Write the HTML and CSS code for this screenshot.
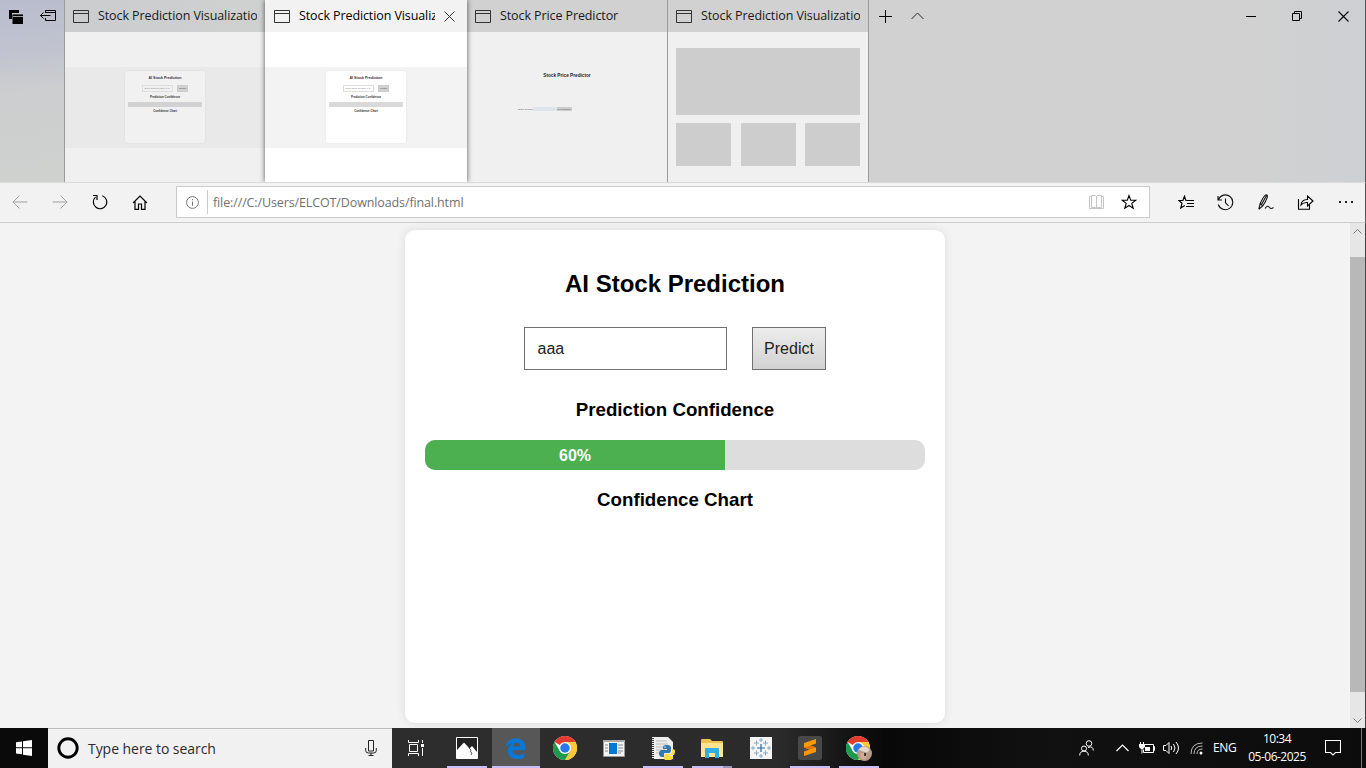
FILE: index.html
```html
<!DOCTYPE html>
<html lang="en">
<head>
<meta charset="utf-8">
<title>Stock Prediction Visualization</title>
<link rel="stylesheet" href="styles.css">
</head>
<body>
<svg class="defs" width="0" height="0">
  <symbol id="win" viewBox="0 0 16 13"><path d="M.5.5h15v12H.5zM.5 3.5h15" fill="none" stroke="currentColor"/></symbol>
  <symbol id="chrome" viewBox="0 0 48 48">
    <circle cx="24" cy="24" r="24" fill="#fff"/>
    <path d="M24 24 3.2 12A24 24 0 0 1 44.8 12H24z" fill="#e33b2e"/>
    <path d="M44.8 12A24 24 0 0 1 24 48l10.4-18A12 12 0 0 0 34.400 18L24 12z" fill="#fcc934"/>
    <path d="M3.200 12A24 24 0 0 0 24 48l10.400-18L24 36 13.600 30z" fill="#1e9a4b"/>
    <circle cx="24" cy="24" r="12" fill="#fff"/><circle cx="24" cy="24" r="9.500" fill="#2878e8"/>
  </symbol>
</svg>
<div class="screen">
  <header class="tabs">
    <div class="tab-tools">
      <svg width="14" height="14" viewBox="0 0 14 14"><path d="M0 0h10v3H3v6H0z"/><path d="M3.500 4H14v10H3.500z"/><path d="M3 4h11M4 6.500h10" stroke="#c5c8d1" stroke-width=".8"/></svg>
      <svg width="16" height="11" viewBox="0 0 16 11"><path d="M5.500 3V.5h10v10h-10V8M5.500 2.500h10M.5 5.500h10M3.500 2.500l-3 3 3 3" fill="none" stroke="#000"/></svg>
    </div>
    <div class="tab faded">
      <div class="tab-head"><svg width="16" height="13"><use href="#win"/></svg><span class="tab-title">Stock Prediction Visualization</span></div>
      <div class="thumb"><div class="mini-page"><div class="mini-card">
        <b class="mini-h">AI Stock Prediction</b>
        <div class="mini-row"><i class="mini-input">Enter Stock Symbol (e.g.,</i><i class="mini-btn">Predict</i></div>
        <b class="mini-s">Prediction Confidence</b><div class="mini-bar"></div><b class="mini-s">Confidence Chart</b>
      </div></div></div>
    </div>
    <div class="tab active">
      <div class="tab-head"><svg width="16" height="13"><use href="#win"/></svg><span class="tab-title">Stock Prediction Visualization</span>
        <svg class="tab-close" width="11" height="11" viewBox="0 0 11 11"><path d="m.5.5 10 10m0-10-10 10" stroke="#333"/></svg></div>
      <div class="thumb"><div class="mini-page"><div class="mini-card">
        <b class="mini-h">AI Stock Prediction</b>
        <div class="mini-row"><i class="mini-input">Enter Stock Symbol (e.g.,</i><i class="mini-btn">Predict</i></div>
        <b class="mini-s">Prediction Confidence</b><div class="mini-bar"></div><b class="mini-s">Confidence Chart</b>
      </div></div></div>
    </div>
    <div class="tab third">
      <div class="tab-head"><svg width="16" height="13"><use href="#win"/></svg><span class="tab-title">Stock Price Predictor</span></div>
      <div class="thumb predictor"><b class="pred-title">Stock Price Predictor</b><div class="pred-form"><span>Stock Symbol:</span><i class="pred-input"></i><i class="pred-btn">Get Prediction</i></div></div>
    </div>
    <div class="tab last">
      <div class="tab-head"><svg width="16" height="13"><use href="#win"/></svg><span class="tab-title">Stock Prediction Visualization</span></div>
      <div class="thumb blocks"><i class="wide"></i><i></i><i></i><i></i></div>
    </div>
    <div class="new-tab">
      <svg width="13" height="13" viewBox="0 0 13 13"><path d="M0 6.500h13M6.500 0v13" stroke="#000"/></svg>
      <svg width="13" height="8" viewBox="0 0 13 8"><path d="m.5 7 6-6 6 6" fill="none" stroke="#222"/></svg>
    </div>
    <div class="window-buttons">
      <svg width="10" height="11" viewBox="0 0 10 11"><path d="M0 5.500h10" stroke="#000"/></svg>
      <svg width="10" height="10" viewBox="0 0 10 10"><path d="M.5 2.500h7v7h-7zM2.500 2.500v-2h7v7h-2" fill="none" stroke="#000"/></svg>
      <svg width="11" height="11" viewBox="0 0 11 11"><path d="m.5.5 10 10m0-10-10 10" stroke="#000" stroke-width="1.100"/></svg>
    </div>
  </header>

  <nav class="toolbar">
    <div class="nav-icons">
      <svg width="16" height="14" viewBox="0 0 16 14"><path d="M15.500 7H1M7.500.5 1 7l6.500 6.500" fill="none" stroke="#a0a0a0"/></svg>
      <svg width="16" height="14" viewBox="0 0 16 14"><path d="M.5 7H15M8.500.5 15 7l-6.500 6.500" fill="none" stroke="#a0a0a0"/></svg>
      <svg width="16" height="16" viewBox="0 0 16 16"><path d="M10.300 1.700A6.700 6.700 0 1 1 3.500 3.100M1 1.500h4V6" fill="none" stroke="#000" stroke-width="1.200"/></svg>
      <svg width="16" height="15" viewBox="0 0 16 15"><path d="m1 8 7-7 7 7M3 6.500v7.800h3.500V9h3v5.300H13V6.500" fill="none" stroke="#000" stroke-width="1.200"/></svg>
    </div>
    <div class="address">
      <svg width="13" height="13" viewBox="0 0 13 13"><circle cx="6.500" cy="6.500" r="5.900" fill="none" stroke="#777"/><path d="M6.500 5.500v4.300M6.500 3v1.200" stroke="#777"/></svg>
      <span class="divider"></span><span class="url">file:///C:/Users/ELCOT/Downloads/final.html</span>
      <svg class="book" width="15" height="14" viewBox="0 0 15 14"><path d="M2.500.5h4l1 1 1-1h4v12h-4l-1 1-1-1h-4zM7.500 1v12M2.500 1.500h-2v12h14v-12h-2" fill="none" stroke="#c4c4c4"/></svg>
      <svg width="16" height="16" viewBox="0 0 16 16"><path d="m8 1.500 1.700 4.600 5.100.2-4 3.100 1.400 4.900L8 11.500l-4.200 2.800 1.400-4.900-4-3.100 5.100-.2z" fill="none" stroke="#000" stroke-width="1.100"/></svg>
    </div>
    <div class="actions">
      <svg width="16" height="15" viewBox="0 0 16 15"><path d="M9 5.500 7.600 5 6.500 1.200 4.900 5.500H.8L4 8.200l-1.200 4.900 4-2.600M8 5.500h8M9 8.500h7M8 11.500h8" fill="none" stroke="#000" stroke-width="1.150"/></svg>
      <svg width="17" height="17" viewBox="0 0 17 17"><path d="M1.500 5.500A7.400 7.400 0 1 1 1.300 10.500M1 2v4h4M8.500 4.500v4.300l3 3" fill="none" stroke="#111" stroke-width="1.100"/></svg>
      <svg width="16" height="16" viewBox="0 0 16 16"><path d="M.8 15.200 2.200 9.500C4.500 4.500 6.500.7 8.300.7c2.400.3.600 5-3.600 11.300L.8 15.200M2.200 9.500l2.500 2.300M3.500 10.500 8.500 1.500M7 14.500q3-4 4.500-1 1.500 2 4 0" fill="none" stroke="#111" stroke-width="1.100"/></svg>
      <svg width="17" height="15" viewBox="0 0 17 15"><path d="M1.500 4v10.300h11V10M4 10q.5-5.500 6.500-5.500V1L16 6l-5.500 5V7.500Q6.500 7 4 10z" fill="none" stroke="#000" stroke-width="1.100"/></svg>
      <svg width="16" height="4" viewBox="0 0 16 4"><path d="M1 1h2v2H1zm6 0h2v2H7zm6 0h2v2h-2z" fill="#222"/></svg>
    </div>
  </nav>

  <div class="viewport">
    <main class="page"><section class="card">
      <h2>AI Stock Prediction</h2>
      <div class="form"><input type="text" value="aaa"><button>Predict</button></div>
      <h3>Prediction Confidence</h3>
      <div class="progress"><div class="progress-fill" style="width:60%">60%</div></div>
      <h3>Confidence Chart</h3>
    </section></main>
    <div class="scrollbar">
      <svg width="9" height="5" viewBox="0 0 9 5"><path d="m.5 4.500 4-4 4 4" fill="none" stroke="#777"/></svg>
      <div class="thumb-bar"></div>
      <svg width="9" height="5" viewBox="0 0 9 5"><path d="m.5.5 4 4 4-4" fill="none" stroke="#777"/></svg>
    </div>
  </div>

  <footer class="taskbar">
    <div class="start"><svg width="16" height="16" viewBox="0 0 16 16"><path d="M0 2.200 6 1.400V7.300H0zM7 1.200 16 0v7.300H7zM0 8.300h6v6L0 13.500zM7 8.300h9V16l-9-1.300z" fill="#fff"/></svg></div>
    <div class="search">
      <svg width="22" height="22" viewBox="0 0 22 22"><circle cx="11" cy="11" r="9.200" fill="none" stroke="#000" stroke-width="2.900"/></svg>
      <span>Type here to search</span>
      <svg width="12" height="16" viewBox="0 0 12 16"><path d="M3.500.5h5v10.500h-5zM.7 8v2.500q0 2.500 2.500 2.500h5.600q2.500 0 2.500-2.500V8M6 13v2.500M3.500 15.500h5" fill="none" stroke="#222"/></svg>
    </div>
    <div class="apps">
      <div class="app view"><svg width="17" height="16" viewBox="0 0 17 16"><path d="M.5 0v2.500h10V0M.5 16v-2.500h10V16M1.500 4.500h8v7h-8zM14.500 0v3M14.500 8v8" fill="none" stroke="#fff"/><path d="M13 4h3v3h-3z" fill="#fff"/></svg></div>
      <div class="app open"><svg width="22" height="22" viewBox="0 0 22 22"><path d="M.5.5h21v21H.5z" fill="#222" stroke="#fff"/><path d="M1 21v-8l7-7.500 5.500 6L16 9l5 6v6z" fill="#fff"/><path d="m13 11 2 2-.5 2 1.500 1-1 2" fill="none" stroke="#333" stroke-width=".8"/></svg></div>
      <div class="app current"><svg width="21" height="21" viewBox="0 0 21 21"><path d="M.5 9.200C1.500 3.500 5.500.2 11 .2c6 0 9.500 4 9.500 9.800v2.200H7.500c.3 3.500 3.300 4.600 6 4.600 2.400 0 4.200-.6 5.700-1.500v4.200c-2 1-4.300 1.500-7 1.500C6.500 21 2.800 18 2.800 13.100c0-3.400 1.800-6 4.800-7.500C4.600 5.600 2 7 .5 9.200zM7.700 8.600h7.500c0-2.500-1.200-3.900-3.500-3.900-2.200 0-3.600 1.500-4 3.900z" fill="#0878d7"/></svg></div>
      <div class="app"><svg width="24" height="24"><use href="#chrome"/></svg></div>
      <div class="app"><svg width="22" height="17" viewBox="0 0 22 17"><path d="M.5.5h21v16H.5z" fill="#f4f4f4" stroke="#999"/><path d="M0 0h22v2H0z" fill="#aaa"/><path d="M6 3h8v11H6z" fill="#0078d7"/><path d="M2 5h3M2 8h3M2 11h3M15 5h5M15 8h5M15 11h5M15 13h3" stroke="#888"/></svg></div>
      <div class="app open"><svg width="24" height="25" viewBox="0 0 24 25"><path d="M1 1h16l5 5v17H1z" fill="#eee"/><path d="M2 0v23" stroke="#333" stroke-width="2" stroke-dasharray="1 1"/><path d="M5 5h11M5 8h12M5 11h12M5 14h9M5 17h9" stroke="#bbb"/><path d="M16 9c-4 0-4 1-4 4h4v1h-5c-4 0-4 7 0 7h2v-4h4c3 0 3-1 3-5 0-2-1-3-4-3z" fill="#3678ac"/><path d="M18 24c4 0 4-1 4-4h-4v-1h5c3-6-1-6-2-6v3c0 2-1 2-3 2h-2c-3 0-3 2-3 4s1 2 5 2z" fill="#ffdc42"/><circle cx="14" cy="11" r=".7" fill="#fff"/></svg></div>
      <div class="app open multi"><svg width="22" height="19" viewBox="0 0 22 19"><path d="M0 1q0-1 1-1h8l2 2h10q1 0 1 1v15H0z" fill="#efc34c"/><path d="M0 4h22v14H0z" fill="#ffe493"/><path d="M4 19V10q0-1 1-1h12q1 0 1 1v9h-4v-5H8v5z" fill="#30aee7"/></svg></div>
      <div class="app"><svg width="22" height="22" viewBox="0 0 22 22"><path d="M0 0h22v22H0z" fill="#f5f5f5"/><path d="M11 7v8M7 11h8" stroke="#286da0" stroke-width="1.200"/><path d="M6.500 3.500v5M4 6h5M15.500 3.500v5M13 6h5M6.500 13.500v5M4 16h5M15.500 13.500v5M13 16h5M11 1v4M9 3h4M11 17v4M9 19h4M3 9v4M1 11h4M19 9v4M17 11h4" stroke="#7fa5bd" stroke-width=".9"/></svg></div>
      <div class="app open"><svg width="24" height="24" viewBox="0 0 24 24"><rect width="24" height="24" rx="2" fill="#484848"/><path d="m6 7 12-4v4.500L12.500 9.500 18 11.500V16L6 20v-4.500l5.500-2L6 11.500z" fill="#ff9800"/><path d="m6 11.500 5.500 2 6.500-2-5.500-2z" fill="#df7800"/></svg></div>
      <div class="app open"><svg width="26" height="25" viewBox="0 0 26 25"><use href="#chrome" width="24" height="24"/><circle cx="18.500" cy="17.500" r="7.500" fill="#b69a8a"/><path d="M12.500 13.500q6-6 11 0l-2 3-5-1z" fill="#e3d8cb"/><path d="M14 17.500q4-2 7 1l-2 5-4-1z" fill="#d9aa92"/><path d="M18 17h2v3h-2z" fill="#49362f"/></svg></div>
    </div>
    <div class="tray">
      <svg class="people" width="15" height="16" viewBox="0 0 15 16"><circle cx="10" cy="3.500" r="2.800" fill="none" stroke="#fff"/><circle cx="5" cy="8.500" r="2.500" fill="none" stroke="#fff"/><path d="M.7 15.500q0-4.300 4.300-4.300t4.300 4.300M9 7.500q5-2 5.300 3" fill="none" stroke="#fff"/></svg>
      <svg class="up" width="13" height="8" viewBox="0 0 13 8"><path d="m.5 7 6-6 6 6" fill="none" stroke="#fff" stroke-width="1.200"/></svg>
      <svg class="battery" width="16" height="12" viewBox="0 0 16 12"><path d="M6 2.500h8.500v8h-10v-3M14.500 4.500h1v4h-1M1.500 0v2M4.500 0v2M3 6v5.500" fill="none" stroke="#fff"/><path d="M0 2h6v3L4 7H2L0 5z" fill="#fff"/><path d="M6 5h5v4H6z" fill="#fff"/></svg>
      <svg class="volume" width="17" height="14" viewBox="0 0 17 14"><path d="M.5 4.500h2.500l3-3v11l-3-3H.5zM8 5q1.500 2 0 4M10.500 3q3 4 0 8M13 1q5 6 0 12" fill="none" stroke="#fff"/></svg>
      <svg class="wifi" width="13" height="13" viewBox="0 0 13 13"><path d="M1 12Q1 1 12.500 1M4 12q0-8 8.500-8M7 12q0-5 5.500-5" fill="none" stroke="#bbb"/><circle cx="11" cy="11" r="1.500" fill="#fff"/></svg>
      <span class="lang">ENG</span>
      <div class="clock"><span class="time">10:34</span><span class="date">05-06-2025</span></div>
      <svg class="note" width="16" height="16" viewBox="0 0 16 16"><path d="M.5.5h15v12h-5L8 15l-2.500-2.500h-5z" fill="none" stroke="#fff" stroke-width="1.100"/></svg>
    </div>
  </footer>
</div>
</body>
</html>
```
FILE: styles.css
```css
* { box-sizing: border-box; }
body { margin: 0; overflow: hidden; font-family: "Open Sans", "Noto Sans", sans-serif; }
svg { display: block; flex: none; }
.defs { position: absolute; }
.screen { width: 1366px; height: 768px; display: flex; flex-direction: column; }

.tabs { height: 182px; display: flex; border-right: 1px solid #555; background: linear-gradient(90deg, #c9cbce 0, #d0d1d0 300px, #d1d1d1 1250px, #cdd0d3 100%); }
.tab-tools { width: 64px; display: flex; align-items: flex-start; padding: 10px 0 0 9px; gap: 17px; background: linear-gradient(175deg, #b8bccd 0, #c1c4cf 30%, #cccecf 50%, #cfd1cf 100%); }
.tab { width: 201px; display: flex; flex-direction: column; border-left: 1px solid #999b9d; }
.tab-head { height: 32px; display: flex; align-items: center; padding: 0 8px; gap: 9px; color: #1a1a1a; }
.tab-head svg { color: #333; }
.tab-title { flex: 1; min-width: 0; overflow: hidden; white-space: nowrap; font-size: 12.5px; letter-spacing: -0.1px; padding-bottom: 2px; }
.tab.active { width: 202px; border: 0; position: relative; box-shadow: 0 0 5px rgba(0,0,0,.65); clip-path: inset(0 -8px 0 -8px); }
.active .tab-head { background: #f2f2f2; color: #000; padding: 0 12px 0 9px; }
.tab.third { width: 200px; border: 0; }
.third .tab-head { padding-left: 8px; }
.tab.last { width: 202px; border-right: 1px solid #999b9d; }
.thumb { flex: 1; padding-top: 35px; background: #f0f0f0; }
.active .thumb { background: #fff; }
.mini-page { height: 81px; background: #e9e9e9; padding: 4px 0 0 60px; }
.active .mini-page { background: #f3f3f3; padding-left: 61px; }
.mini-card { width: 80px; height: 72px; padding-top: 5px; display: flex; flex-direction: column; align-items: center; border-radius: 2px; background: #f1f1f1; box-shadow: 0 0 2px rgba(0,0,0,.08); font-family: "Liberation Sans", sans-serif; color: #333; }
.active .mini-card { background: #fff; }
.mini-h { font-size: 3.6px; line-height: 5px; }
.mini-row { display: flex; gap: 4px; margin: 4px 0 3px; }
.mini-input, .mini-btn { height: 7px; border: 1px solid #ddd; font: normal 2.3px/5px "Liberation Sans", sans-serif; color: #888; text-align: center; white-space: nowrap; overflow: hidden; }
.mini-input { width: 31px; }
.mini-btn { width: 11px; background: #d2d2d2; border-color: #ccc; color: #444; }
.mini-s { font-size: 2.85px; line-height: 4px; }
.mini-bar { width: 74px; height: 5px; margin: 3px 0 2px; border-radius: 1px; background: #d9d9d9; }
.faded .mini-bar { background: #d2d2d2; }
.predictor { padding-top: 41px; font-family: "Liberation Sans", sans-serif; }
.pred-title { display: block; font-size: 4.7px; line-height: 6px; text-align: center; color: #222; }
.pred-form { display: flex; align-items: center; height: 4px; margin: 28px 0 0 51px; font-size: 2.4px; color: #555; }
.pred-input { width: 24px; height: 4px; background: #dde4ea; }
.pred-btn { width: 15px; height: 4px; background: #ccc; font: normal 2.1px/4px "Liberation Sans", sans-serif; overflow: hidden; white-space: nowrap; }
.blocks { display: grid; grid-template-columns: repeat(3, 55px); grid-template-rows: 67px 43px; justify-content: space-between; align-content: start; row-gap: 8px; padding: 16px 8px 0; }
.blocks i { background: #cdcdcd; }
.blocks .wide { grid-column: 1 / 4; }
.new-tab { display: flex; align-items: flex-start; gap: 19px; padding: 10px 0 0 10px; }
.new-tab svg + svg { margin-top: 2px; }
.window-buttons { display: flex; align-items: flex-start; margin-left: auto; padding: 11px 16px 0 0; gap: 36px; }

.toolbar { height: 41px; display: flex; align-items: center; background: #f2f2f2; border-top: 1px solid #dadada; border-bottom: 1px solid #ccc; border-right: 1px solid #555; }
.nav-icons { width: 176px; display: flex; align-items: center; gap: 24px; padding: 0 0 1px 12px; }
.address { width: 974px; height: 32px; display: flex; align-items: center; margin-bottom: 1px; padding: 0 12px 0 9px; background: #fff; border: 1px solid #ccc; }
.divider { width: 1px; height: 24px; margin: 0 5px 0 8px; background: #ccc; }
.url { font-size: 12.5px; letter-spacing: -0.12px; color: #707070; }
.book { margin: 0 17px 0 auto; }
.actions { display: flex; align-items: center; padding: 0 0 1px 28px; gap: 23.400px; }

.viewport { height: 505px; display: flex; background: #f3f3f3; border-right: 1px solid #444; }
.page { width: 1350px; padding-top: 7px; overflow: hidden; }
.card { width: 540px; height: 493px; margin: 0 auto; padding: 20px; background: #fff; border-radius: 10px; box-shadow: 0 0 10px rgba(0,0,0,.1); text-align: center; font-family: "Liberation Sans", Arial, sans-serif; color: #000; }
.card h2 { margin: 20px 0 29px; font-size: 24px; line-height: 28px; }
.form { display: flex; justify-content: center; gap: 25px; }
.form input { width: 203px; height: 43px; padding: 0 12.500px; border: 1px solid #707070; border-radius: 0; font: 16px "Liberation Sans", sans-serif; color: #222; }
.form button { width: 74px; height: 43px; padding: 0; border: 1px solid #707070; background: linear-gradient(#ececec, #d2d2d2); font: 16px "Liberation Sans", sans-serif; color: #222; }
.card h3 { margin: 29px 0 19px; font-size: 18.720px; line-height: 22px; }
.progress { height: 30px; border-radius: 10px; overflow: hidden; background: #ddd; }
.progress-fill { height: 30px; background: #4caf50; color: #fff; font-weight: bold; font-size: 16px; line-height: 32px; }
.progress + h3 { margin-top: 19px; }
.scrollbar { width: 15px; display: flex; flex-direction: column; align-items: center; padding: 6px 0 5px; background: #e6e6e6; }
.thumb-bar { width: 15px; height: 435px; margin: 23px 0 auto; background: #b8b8b8; }

.taskbar { height: 40px; display: flex; background: linear-gradient(90deg, #0a0a0a 0, #0a0a0a 48px, #2d2d2d 392px, #2b2b2b 780px, #171717 840px, #080808 885px, #111 1050px, #0c0c0c 100%); color: #fff; }
.start { width: 48px; display: flex; align-items: center; justify-content: center; }
.search { width: 344px; display: flex; align-items: center; padding: 0 15px 1px 9px; background: #f1f1f1; border-top: 1px solid #bbb; color: #2b2b2b; font-size: 14px; }
.search span { margin: 0 auto 0 9px; letter-spacing: -0.05px; }
.apps { display: flex; }
.app { width: 49px; display: flex; align-items: center; justify-content: center; }
.app.view { width: 50px; padding-right: 2px; }
.app.open { background: linear-gradient(90deg, #c7bdf7, #c7bdf7) center bottom / 40px 2px no-repeat; }
.app.current { background: #575757; border-bottom: 2px solid #c7bdf7; padding: 2px 1px 0 0; margin: 0 0 0 1px; width: 48px; }
.app.open.multi { background: linear-gradient(90deg, #c7bdf7 31px, #9b95ba 31px) center bottom / 40px 2px no-repeat; }
.tray { flex: 1; display: flex; align-items: center; padding-left: 196px; margin-right: 4px; border-right: 1px solid #777; }
.up { margin-left: 22px; }
.battery { margin-left: 10px; }
.volume { margin-left: 8px; }
.wifi { margin-left: 10px; }
.lang { margin-left: 10px; font-size: 12px; width: 25px; letter-spacing: -0.35px; padding-bottom: 1px; }
.clock { width: 66px; margin: 0 0 0 6px; display: flex; flex-direction: column; align-items: center; font-size: 12px; line-height: 18px; white-space: nowrap; }
.time, .date { letter-spacing: -0.5px; }
.note { margin-left: 15px; }
```
